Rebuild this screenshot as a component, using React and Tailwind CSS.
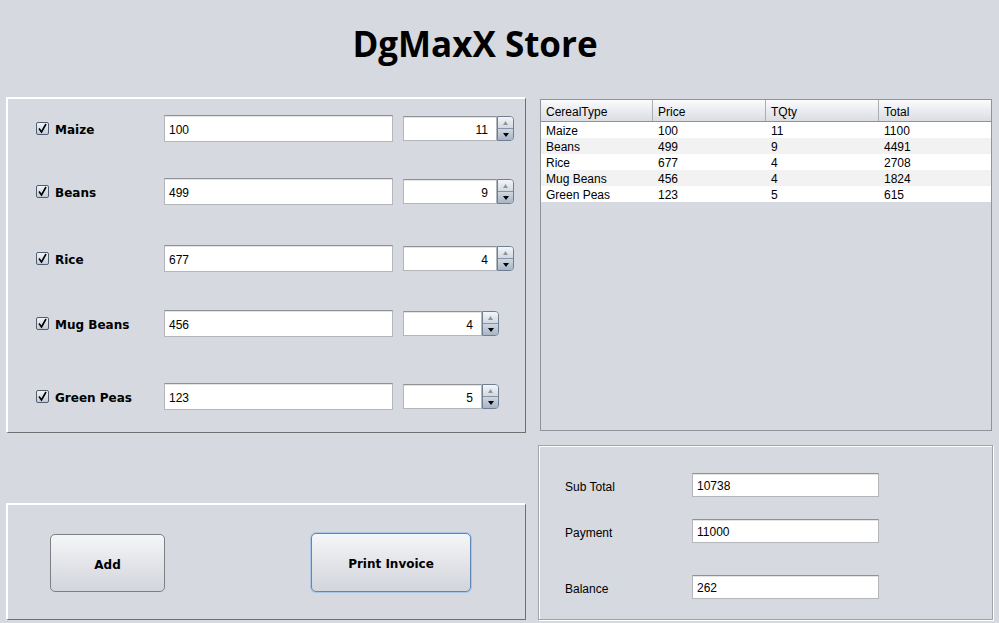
import React from 'react';

const cereals = [
  { name: 'Maize', price: '100', qty: '11', total: '1100', mt: 'mt-[16px]', wide: true },
  { name: 'Beans', price: '499', qty: '9', total: '4491', mt: 'mt-[36px]', wide: true },
  { name: 'Rice', price: '677', qty: '4', total: '2708', mt: 'mt-[40px]', wide: true },
  { name: 'Mug Beans', price: '456', qty: '4', total: '1824', mt: 'mt-[38px]', wide: false },
  { name: 'Green Peas', price: '123', qty: '5', total: '615', mt: 'mt-[46px]', wide: false },
];

const summary = [
  { label: 'Sub Total', value: '10738', mt: 'mt-[27px]' },
  { label: 'Payment', value: '11000', mt: 'mt-[22px]' },
  { label: 'Balance', value: '262', mt: 'mt-[32px]' },
];

function CheckBox() {
  return (
    <div className="w-[13px] h-[13px] rounded-[2px] border border-[#4f5d6e] bg-gradient-to-b from-[#f1f4f7] to-[#c3ccd8] flex items-center justify-center">
      <svg width="11" height="11" viewBox="0 0 11 11">
        <path d="M2 5.5 L4.5 9 L9 1" fill="none" stroke="#000" strokeWidth="1.6" />
      </svg>
    </div>
  );
}

function TextField({ value, className = '', right = false }) {
  return (
    <div
      className={`bg-white border border-[#b3b6ba] border-t-[#8e9297] shadow-[inset_0_1px_0_#e4e4e4] flex items-center pt-[2px] text-[12px] text-black ${right ? 'justify-end pr-[8px]' : 'pl-[4px]'} ${className}`}
    >
      {value}
    </div>
  );
}

function Spinner({ value, wide }) {
  return (
    <div className={`flex h-[25px] ml-[10px] ${wide ? 'w-[111px]' : 'w-[96px]'}`}>
      <TextField value={value} right className="flex-1 h-full" />
      <div className="w-[17px] h-full flex flex-col rounded-r-[4px] border border-[#6f7f93] overflow-hidden">
        <div className="flex-1 bg-gradient-to-b from-[#f3f5f8] to-[#d3d9e1] flex items-center justify-center border-b border-[#8794a5]">
          <svg width="5" height="4" viewBox="0 0 5 4">
            <path d="M0 4 L2.5 0 L5 4 Z" fill="#8c96a2" />
          </svg>
        </div>
        <div className="flex-1 bg-gradient-to-b from-[#cfd7e1] to-[#a8b5c6] flex items-center justify-center">
          <svg width="6" height="4" viewBox="0 0 6 4">
            <path d="M0 0 L6 0 L3 4 Z" fill="#000" />
          </svg>
        </div>
      </div>
    </div>
  );
}

function Button({ label, focused, className = '' }) {
  return (
    <div
      className={`rounded-[5px] border bg-gradient-to-b from-[#f5f6f8] via-[#e3e5e9] to-[#d2d5db] flex items-center justify-center pt-[3px] text-[12px] font-bold font-['DejaVu_Sans'] text-black ${focused ? 'border-[#5f86b8] ring-1 ring-[#a9c6e8]' : 'border-[#7c7f84]'} ${className}`}
    >
      {label}
    </div>
  );
}

export default function App() {
  return (
    <div className="w-[999px] h-[623px] bg-[#d6d9df] overflow-hidden flex flex-col font-['Liberation_Sans',sans-serif]">
      <div className="h-[97px] pt-[26px] pr-[49px] text-center">
        <h1 className="text-[35px] leading-none font-bold font-['Open_Sans',sans-serif] text-black">DgMaxX Store</h1>
      </div>

      <div className="flex">
        {/* left column */}
        <div className="ml-[6px] w-[520px] flex flex-col">
          <div className="h-[336px] border-t-2 border-l-2 border-white border-r border-b border-r-[#707070] border-b-[#707070] flex flex-col">
            {cereals.map((c) => (
              <div key={c.name} className={`flex items-center h-[27px] ${c.mt}`}>
                <div className="w-[156px] pl-[28px] flex items-center">
                  <CheckBox />
                  <span className="ml-[6px] pt-[2px] text-[12px] font-bold font-['DejaVu_Sans'] text-black">{c.name}</span>
                </div>
                <TextField value={c.price} className="w-[229px] h-[27px]" />
                <Spinner value={c.qty} wide={c.wide} />
              </div>
            ))}
          </div>

          <div className="mt-[70px] h-[117px] border-t-2 border-l-2 border-white border-r border-b border-r-[#707070] border-b-[#707070] flex items-start">
            <Button label="Add" className="ml-[42px] mt-[29px] w-[115px] h-[58px]" />
            <Button label="Print Invoice" focused className="ml-[146px] mt-[28px] w-[160px] h-[59px]" />
          </div>
        </div>

        {/* right column */}
        <div className="ml-[12px] w-[455px] flex flex-col">
          <div className="ml-[2px] mt-[2px] w-[452px] h-[332px] border border-[#8f949c] flex flex-col">
            <div className="grid grid-cols-[112px_113px_113px_1fr] h-[22px] border-b border-[#8c929b] bg-gradient-to-b from-[#fbfbfc] to-[#dadde2] text-[12px] text-black">
              {['CerealType', 'Price', 'TQty', 'Total'].map((h, i) => (
                <div
                  key={h}
                  className={`pl-[5px] pt-[2px] flex items-center ${i < 3 ? 'border-r border-[#a9adb4]' : ''}`}
                >
                  {h}
                </div>
              ))}
            </div>
            {cereals.map((c, i) => (
              <div
                key={c.name}
                className={`grid grid-cols-[112px_113px_113px_1fr] h-[16px] pt-[2px] text-[12px] text-black leading-[14px] ${i % 2 ? 'bg-[#f2f2f2]' : 'bg-white'}`}
              >
                <div className="pl-[5px]">{c.name}</div>
                <div className="pl-[5px]">{c.price}</div>
                <div className="pl-[5px]">{c.qty}</div>
                <div className="pl-[5px]">{c.total}</div>
              </div>
            ))}
          </div>

          <div className="mt-[14px] h-[175px] border border-[#a0a3a8] shadow-[inset_1px_1px_0_#fff,1px_1px_0_#fff] flex flex-col">
            {summary.map((s) => (
              <div key={s.label} className={`flex items-center h-[24px] ${s.mt}`}>
                <span className="w-[127px] ml-[26px] pt-[3px] text-[12px] text-black">{s.label}</span>
                <TextField value={s.value} className="w-[187px] h-[24px]" />
              </div>
            ))}
          </div>
        </div>
      </div>
    </div>
  );
}
